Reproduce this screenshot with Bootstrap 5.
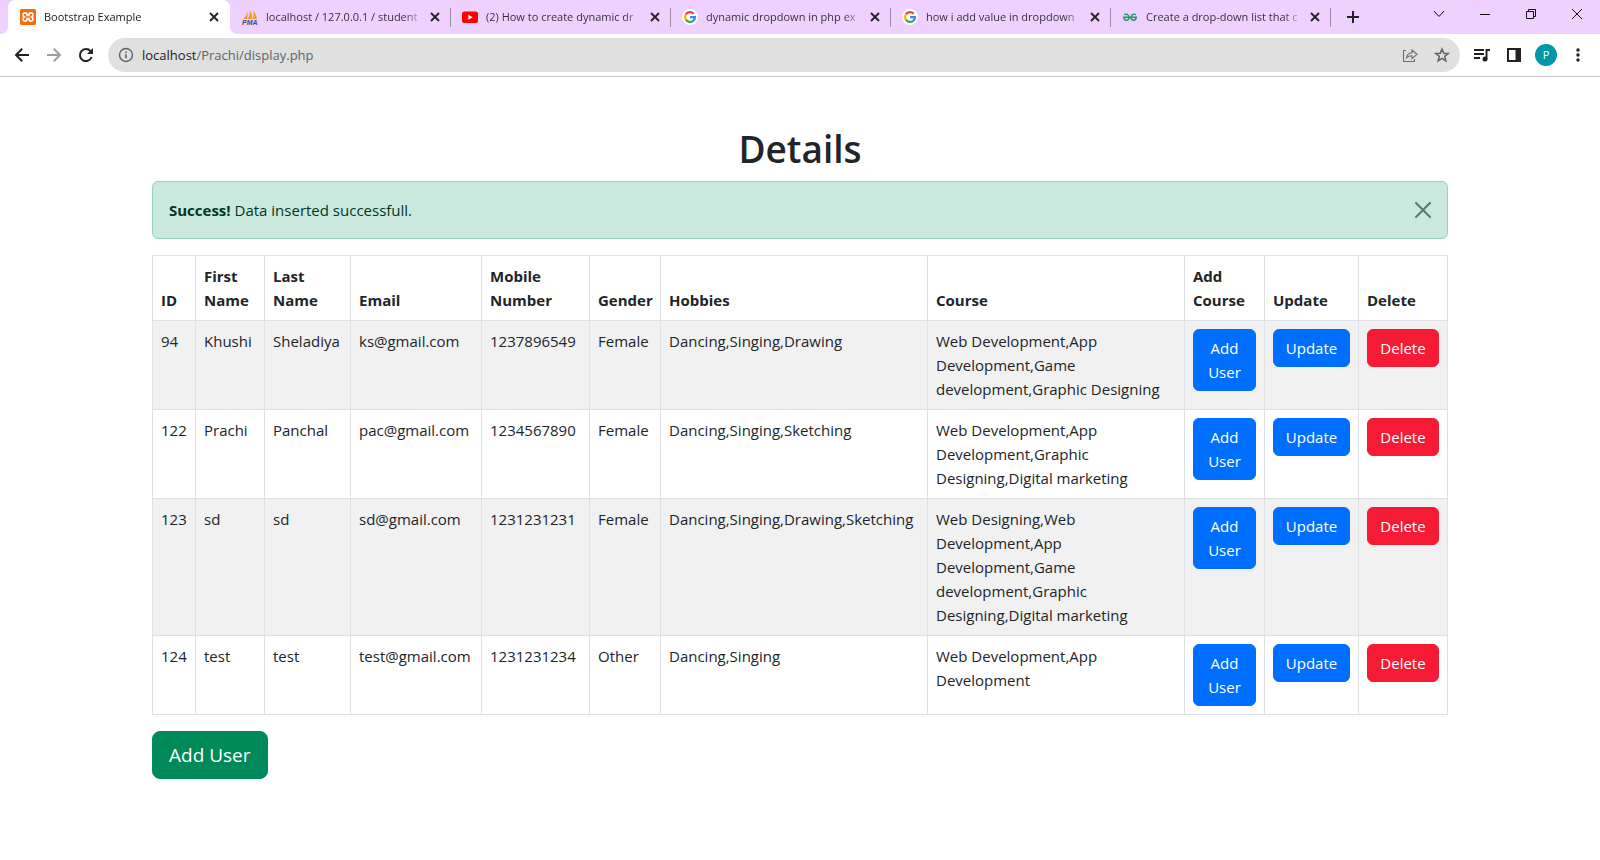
<!DOCTYPE html>
<html lang="en">
<head>
<meta charset="utf-8">
<meta name="viewport" content="width=device-width, initial-scale=1">
<title>Bootstrap Example</title>
<link href="https://cdn.jsdelivr.net/npm/bootstrap@5.3.0/dist/css/bootstrap.min.css" rel="stylesheet">
<style>
  body { font-family: "Open Sans", "Noto Sans", sans-serif; font-size: 15px; line-height: 24px; color: #212529; }
  h1 { font-size: 37px; line-height: 48px; font-weight: 600; }

  /* browser window */
  .tab-strip { height: 34px; background: #eed2fd; padding-left: 10px; }
  .browser-tab { position: relative; width: 220px; height: 34px; padding: 0 9px 0 12px; font-size: 11px; line-height: 34px; color: #3a2f40; }
  .browser-tab + .browser-tab:not(.first-idle)::before,
  .browser-tab:last-of-type::after { content: ""; position: absolute; left: 0; top: 8px; width: 1px; height: 19px; background: #9c8aa6; }
  .browser-tab.last-idle::after { content: ""; position: absolute; right: -1px; top: 8px; width: 1px; height: 19px; background: #9c8aa6; }
  .browser-tab.current { color: #202124; padding: 0 10px; }
  .browser-tab.current .tab-shape { position: absolute; left: -10px; top: 0; width: 248px; height: 34px; }
  .browser-tab > svg:not(.tab-shape), .browser-tab > span, .browser-tab > button { position: relative; }
  .tab-label { width: 158px; margin-left: 8px; overflow: hidden; white-space: nowrap;
    -webkit-mask-image: linear-gradient(90deg, #000 138px, transparent 158px); mask-image: linear-gradient(90deg, #000 138px, transparent 158px); }
  .bare-btn { border: 0; background: none; padding: 0; color: #202124; display: flex; align-items: center; justify-content: center; flex: none; }
  .tab-close { width: 12px; height: 12px; margin-left: auto; }
  .new-tab { width: 46px; height: 34px; }
  .win-btn { width: 46px; height: 28px; color: #111; }
  .toolbar { height: 43px; padding: 0 6px; border-bottom: 1px solid #c6c6c6; }
  .tool-btn { width: 32px; height: 34px; }
  .address { height: 34px; margin: 0 6px; padding: 0 2px 0 10px; border-radius: 17px; background: #e0e0e0; font-size: 13px; line-height: 34px; color: #5f6368; }
  .address a { color: inherit; text-decoration: none; margin-left: 8px; }
  .address a b { color: #202124; font-weight: 400; }
  .avatar { width: 22px; height: 22px; border-radius: 50%; background: #0097a7; color: #fff; font-size: 11px; line-height: 22px; }

  /* page */
  .alert-success { color: #003822; background: #cbe8de; border-color: #93d2bc; }
  .btn-close { font-size: 16px; }
  .btn { font-size: 15px; line-height: 24px; white-space: normal; }
  .btn-primary { background: #006fff; border-color: #006fff; }
  .btn-danger { background: #f51b34; border-color: #f51b34; }
  .btn-success { background: #008a5a; border-color: #008a5a; }
  .btn-lg { font-size: 19px; line-height: 30px; border-radius: 8px; }
  .people { table-layout: fixed; --bs-table-striped-bg: #f1f1f1; }
  .people th { vertical-align: bottom; }
  .c-id { width: 43px; } .c-first { width: 69px; } .c-last { width: 86px; } .c-email { width: 131px; }
  .c-mobile { width: 108px; } .c-gender { width: 71px; } .c-hobbies { width: 267px; }
  .c-add { width: 80px; } .c-update { width: 94px; } .c-delete { width: 89px; }
  .people th, .people td { white-space: nowrap; }
  .people .wrap { white-space: normal; }
  .people .btn { padding-left: 4px; padding-right: 4px; }
  .people .two-line { padding-left: 12px; padding-right: 12px; }
</style>
</head>
<body>
<svg class="d-none">
  <symbol id="x" viewBox="0 0 12 12"><path d="M2 2l8 8M10 2l-8 8" stroke="currentColor" stroke-width="1.8" fill="none"/></symbol>
  <symbol id="google" viewBox="0 0 16 16"><circle cx="8" cy="8" r="8" fill="#fff"/><g fill="none" stroke-width="2.3"><path d="M3.9 5.4A4.9 4.9 0 0 1 11.6 4.6" stroke="#ea4335"/><path d="M3.9 10.7A5 5 0 0 1 3.9 5.4" stroke="#fbbc05"/><path d="M11.2 11.8A4.9 4.9 0 0 1 3.9 10.7" stroke="#34a853"/><path d="M8 8.2H12.9A4.9 4.9 0 0 1 11.2 11.8" stroke="#4285f4"/></g></symbol>
</svg>

<header>
  <div class="tab-strip d-flex align-items-start">
    <div class="browser-tab current d-flex align-items-center">
      <svg class="tab-shape" viewBox="0 0 248 34"><path d="M0 34Q8 34 8 26V8Q8 0 16 0H222Q230 0 230 8V26Q230 34 238 34Z" fill="#fff"/></svg>
      <svg width="16" height="16" viewBox="0 0 16 16"><rect width="16" height="16" rx="1.500" fill="#f96a0c"/><path d="M5.200 3.800c-2.700 0-2.700 3.200-.8 4.200-1.900 1-1.900 4.200.8 4.200 1.600 0 1.900-1 1.900-2.600h1.800c0 1.600.3 2.600 1.900 2.600 2.700 0 2.700-3.200.8-4.200 1.900-1 1.900-4.200-.8-4.200-1.600 0-1.900 1-1.900 2.600H7.100c0-1.600-.3-2.600-1.900-2.600z" fill="none" stroke="#fff" stroke-width="1.700"/></svg>
      <span class="tab-label">Bootstrap Example</span>
      <button class="bare-btn tab-close" aria-label="Close tab"><svg width="12" height="12"><use href="#x"/></svg></button>
    </div>
    <div class="browser-tab first-idle d-flex align-items-center">
      <svg width="16" height="16" viewBox="0 0 16 16"><path d="M1 10Q4.500 7 5.500 2.500V10ZM6 10Q8.500 5 7.500 .5Q10.500 5 10.500 10ZM11 10Q12 6 11 1.500Q15 6 15 10Z" fill="#f8981d"/><text x="0" y="16" font-family="Liberation Sans" font-size="7" font-weight="700" font-style="italic" fill="#3f4a78">PMA</text></svg>
      <span class="tab-label">localhost / 127.0.0.1 / student</span>
      <button class="bare-btn tab-close" aria-label="Close tab"><svg width="12" height="12"><use href="#x"/></svg></button>
    </div>
    <div class="browser-tab d-flex align-items-center">
      <svg width="16" height="16" viewBox="0 0 16 16"><rect y="2.500" width="16" height="11.500" rx="2.500" fill="#f00"/><path d="M6.400 5.800v5l4.200-2.500z" fill="#fff"/></svg>
      <span class="tab-label">(2) How to create dynamic dr</span>
      <button class="bare-btn tab-close" aria-label="Close tab"><svg width="12" height="12"><use href="#x"/></svg></button>
    </div>
    <div class="browser-tab d-flex align-items-center">
      <svg width="16" height="16"><use href="#google"/></svg>
      <span class="tab-label">dynamic dropdown in php ex</span>
      <button class="bare-btn tab-close" aria-label="Close tab"><svg width="12" height="12"><use href="#x"/></svg></button>
    </div>
    <div class="browser-tab d-flex align-items-center">
      <svg width="16" height="16"><use href="#google"/></svg>
      <span class="tab-label">how i add value in dropdown</span>
      <button class="bare-btn tab-close" aria-label="Close tab"><svg width="12" height="12"><use href="#x"/></svg></button>
    </div>
    <div class="browser-tab last-idle d-flex align-items-center">
      <svg width="16" height="16" viewBox="0 0 16 16"><path d="M2 5.600Q6 4 7 8.200M14 5.600Q10 4 9 8.200M1 8.300H15M2 8.500Q2 11.300 4.500 11.300T7 8M14 8.500Q14 11.300 11.500 11.300T9 8" fill="none" stroke="#1f9a63" stroke-width="1.500"/></svg>
      <span class="tab-label">Create a drop-down list that c</span>
      <button class="bare-btn tab-close" aria-label="Close tab"><svg width="12" height="12"><use href="#x"/></svg></button>
    </div>
    <button class="bare-btn new-tab" aria-label="New tab"><svg width="12" height="12"><path d="M6 0v12M0 6h12" stroke="currentColor" stroke-width="2"/></svg></button>
    <div class="d-flex ms-auto">
      <button class="bare-btn win-btn" aria-label="Search tabs"><svg width="12" height="8"><path d="M1 1l5 5.500 5-5.500" fill="none" stroke="currentColor"/></svg></button>
      <button class="bare-btn win-btn" aria-label="Minimize"><svg width="10" height="1"><path d="M0 .5h10" stroke="currentColor"/></svg></button>
      <button class="bare-btn win-btn" aria-label="Restore"><svg width="10" height="10"><path d="M.5 2.500h7v7h-7zM2.500 2.500v-2h7v7h-2" fill="none" stroke="currentColor"/></svg></button>
      <button class="bare-btn win-btn" aria-label="Close"><svg width="10" height="10"><path d="M0 0l10 10M10 0L0 10" stroke="currentColor"/></svg></button>
    </div>
  </div>

  <div class="toolbar d-flex align-items-center">
    <button class="bare-btn tool-btn" aria-label="Back"><svg width="16" height="16"><path d="M15 8H2M8.200 1.700L2 8l6.200 6.300" fill="none" stroke="#202124" stroke-width="2"/></svg></button>
    <button class="bare-btn tool-btn" aria-label="Forward"><svg width="16" height="16"><path d="M1 8h13M7.800 1.700L14 8l-6.200 6.300" fill="none" stroke="#9d9d9d" stroke-width="2"/></svg></button>
    <button class="bare-btn tool-btn" aria-label="Reload"><svg width="16" height="16"><path d="M13.600 10A6 6 0 1 1 12.500 4.200" fill="none" stroke="#202124" stroke-width="2"/><path d="M15 1v6H9z" fill="#202124"/></svg></button>
    <div class="address d-flex align-items-center flex-grow-1">
      <svg width="16" height="16"><circle cx="8" cy="8" r="6.500" fill="none" stroke="#5f6368" stroke-width="1.400"/><path d="M8 7.200v4M8 4.500v1.500" stroke="#5f6368" stroke-width="1.600"/></svg>
      <a href="#" class="me-auto"><b>localhost</b>/Prachi/display.php</a>
      <button class="bare-btn tool-btn" aria-label="Share"><svg width="16" height="16"><path d="M4 3.500H1.500v11h11V12M4.500 11C5 7.500 7 6 10 5.800V3l5 4.300-5 4.200V8.800C7.500 8.700 6 9.300 4.500 11z" fill="none" stroke="#6b6e72" stroke-width="1.100"/></svg></button>
      <button class="bare-btn tool-btn" aria-label="Bookmark"><svg width="16" height="16"><path d="M8 2l1.700 4.200 4.500.3-3.500 2.900 1.100 4.400L8 11.400l-3.800 2.400 1.100-4.400L1.800 6.500l4.500-.3z" fill="none" stroke="#5f6368" stroke-width="1.500"/></svg></button>
    </div>
    <button class="bare-btn tool-btn" aria-label="Media"><svg width="16" height="14"><path d="M0 2h10M0 6h10M0 10h6M12.500 11V2H16" fill="none" stroke="#202124" stroke-width="1.900"/><circle cx="11" cy="11" r="2.500" fill="#202124"/></svg></button>
    <button class="bare-btn tool-btn" aria-label="Side panel"><svg width="14" height="14"><path d="M1 1h12v12H1z" fill="none" stroke="#202124" stroke-width="2"/><path d="M8.500 1H13v12H8.500z" fill="#202124"/></svg></button>
    <button class="bare-btn tool-btn" aria-label="Profile"><span class="avatar">P</span></button>
    <button class="bare-btn tool-btn" aria-label="Menu"><svg width="4" height="14" fill="#202124"><circle cx="2" cy="2" r="1.700"/><circle cx="2" cy="7" r="1.700"/><circle cx="2" cy="12" r="1.700"/></svg></button>
  </div>
</header>

<main class="container mt-5">
  <h1 class="text-center mb-2">Details</h1>
  <div class="alert alert-success alert-dismissible mb-3" role="alert">
    <strong>Success!</strong> Data inserted successfull.
    <button type="button" class="btn-close" data-bs-dismiss="alert" aria-label="Close"></button>
  </div>
  <table class="table table-bordered table-striped people mb-3">
    <colgroup><col class="c-id"><col class="c-first"><col class="c-last"><col class="c-email"><col class="c-mobile"><col class="c-gender"><col class="c-hobbies"><col><col class="c-add"><col class="c-update"><col class="c-delete"></colgroup>
    <thead>
      <tr><th>ID</th><th class="wrap">First Name</th><th class="wrap">Last Name</th><th>Email</th><th class="wrap">Mobile Number</th><th>Gender</th><th>Hobbies</th><th>Course</th><th class="wrap">Add Course</th><th>Update</th><th>Delete</th></tr>
    </thead>
    <tbody>
      <tr><td>94</td><td>Khushi</td><td>Sheladiya</td><td>ks@gmail.com</td><td>1237896549</td><td>Female</td><td>Dancing,Singing,Drawing</td><td class="wrap">Web Development,App Development,Game development,Graphic Designing</td><td><button class="btn btn-primary d-block w-100 two-line">Add User</button></td><td><button class="btn btn-primary d-block w-100">Update</button></td><td><button class="btn btn-danger d-block w-100">Delete</button></td></tr>
      <tr><td>122</td><td>Prachi</td><td>Panchal</td><td>pac@gmail.com</td><td>1234567890</td><td>Female</td><td>Dancing,Singing,Sketching</td><td class="wrap">Web Development,App Development,Graphic Designing,Digital marketing</td><td><button class="btn btn-primary d-block w-100 two-line">Add User</button></td><td><button class="btn btn-primary d-block w-100">Update</button></td><td><button class="btn btn-danger d-block w-100">Delete</button></td></tr>
      <tr><td>123</td><td>sd</td><td>sd</td><td>sd@gmail.com</td><td>1231231231</td><td>Female</td><td>Dancing,Singing,Drawing,Sketching</td><td class="wrap">Web Designing,Web Development,App Development,Game development,Graphic Designing,Digital marketing</td><td><button class="btn btn-primary d-block w-100 two-line">Add User</button></td><td><button class="btn btn-primary d-block w-100">Update</button></td><td><button class="btn btn-danger d-block w-100">Delete</button></td></tr>
      <tr><td>124</td><td>test</td><td>test</td><td>test@gmail.com</td><td>1231231234</td><td>Other</td><td>Dancing,Singing</td><td class="wrap">Web Development,App Development</td><td><button class="btn btn-primary d-block w-100 two-line">Add User</button></td><td><button class="btn btn-primary d-block w-100">Update</button></td><td><button class="btn btn-danger d-block w-100">Delete</button></td></tr>
    </tbody>
  </table>
  <button class="btn btn-success btn-lg">Add User</button>
</main>
<script src="https://cdn.jsdelivr.net/npm/bootstrap@5.3.0/dist/js/bootstrap.bundle.min.js"></script>
</body>
</html>
